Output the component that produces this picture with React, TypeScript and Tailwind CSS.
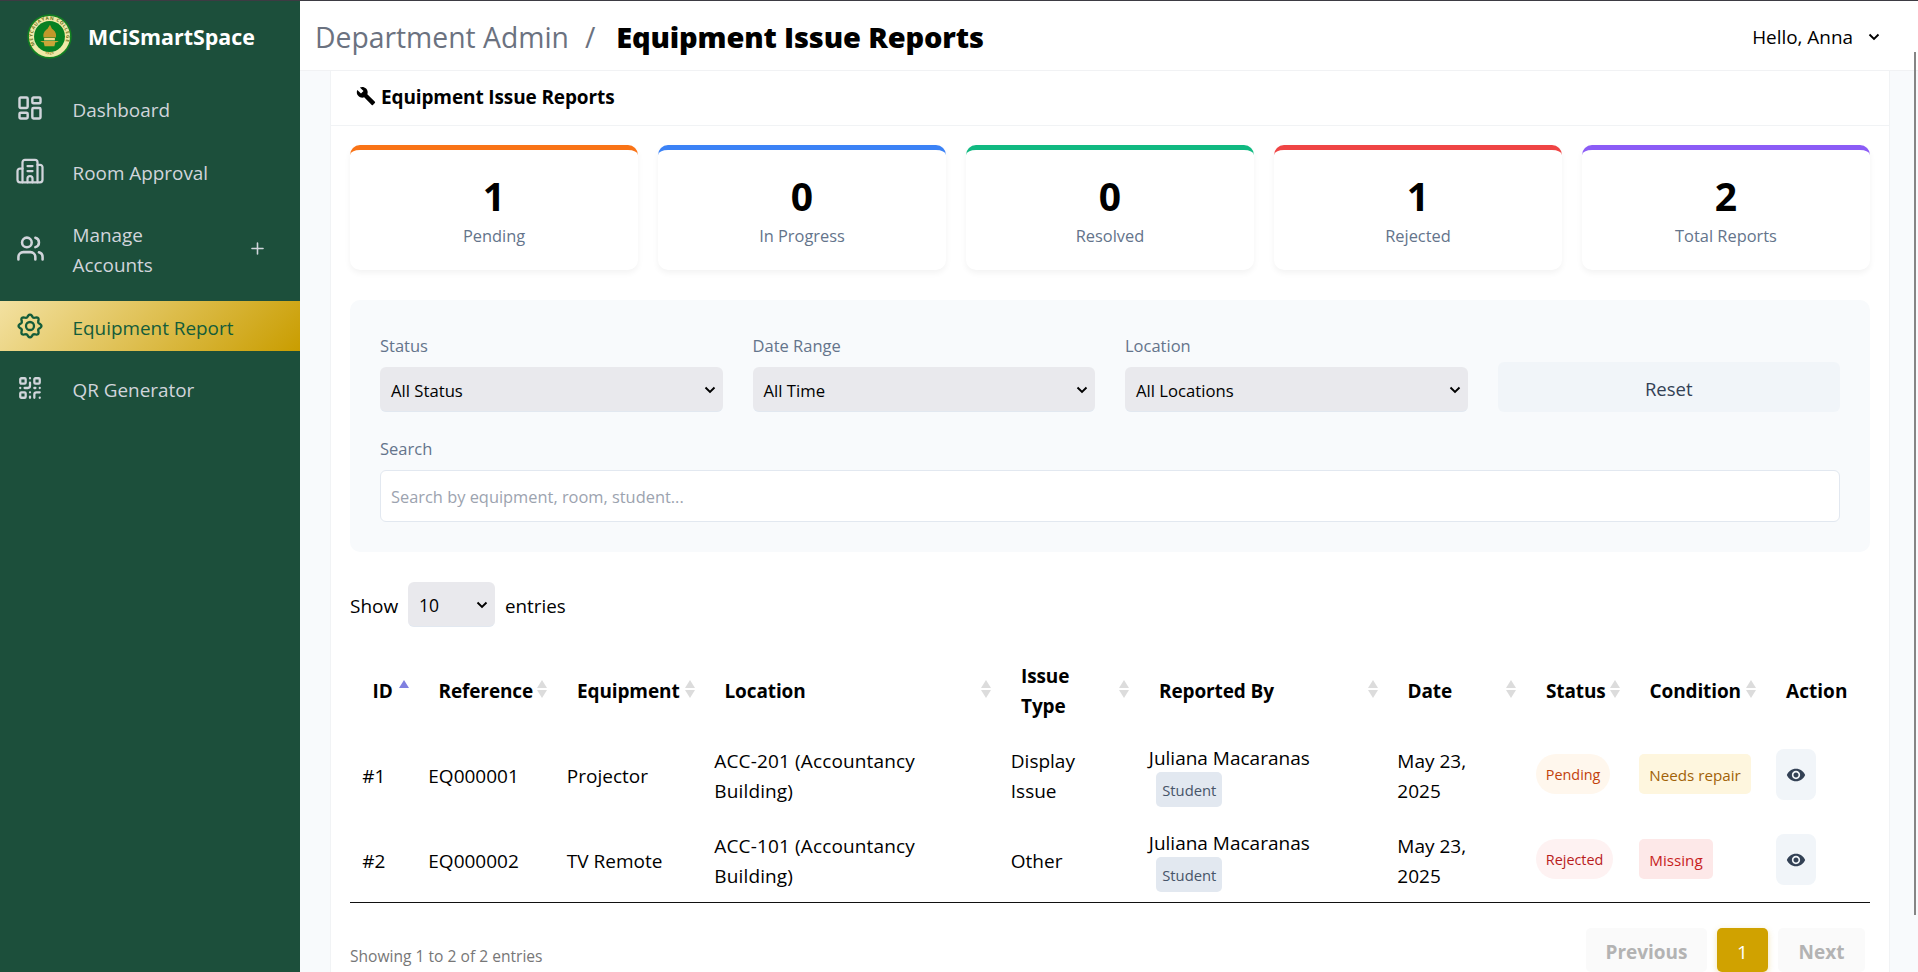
import React from "react";
import { LayoutDashboard, Building2, Users, QrCode, Plus } from "lucide-react";
import { MdBuild, MdVisibility } from "react-icons/md";

const Chevron = ({ className = "" }: { className?: string }) => (
  <svg className={className} width="12" height="8" viewBox="0 0 12 8" fill="none" stroke="#000" strokeWidth="1.900">
    <path d="M1.500 1.500 6 6l4.500-4.500" />
  </svg>
);

const Logo = () => (
  <svg width="45" height="45" viewBox="0 0 46 46">
    <defs>
      <path id="ringTop" d="M9.300 33.500A17.200 17.200 0 1 1 36.700 33.500" />
      <path id="ringBottom" d="M15 39.500A19 19 0 0 0 31 39.500" />
    </defs>
    <circle cx="23" cy="23" r="22.700" fill="#128021" />
    <circle cx="23" cy="23" r="21" fill="#f0e9a8" />
    <text fontSize="4.800" fontWeight="700" fill="#6d7420">
      <textPath href="#ringTop" startOffset="2" textLength="68">MEYCAUAYAN COLLEGE</textPath>
    </text>
    <text fontSize="4" fontWeight="700" fill="#a08c2a">
      <textPath href="#ringBottom" startOffset="3.500">1925</textPath>
    </text>
    <circle cx="23" cy="23" r="15.800" fill="#078023" />
    <path d="M17 24c-1-4 1-7 4-9l2.500-4 2 4c3 2 5 5 4 9z" fill="#c0982a" />
    <path d="M13.500 27.500h19l-2 1.500h-15zM17 29h12l-1 4H18z" fill="#c9a638" />
    <path d="M17.500 24.500h11v2.500h-11z" fill="#f0dc8e" />
  </svg>
);

const COG = Array.from({ length: 97 }, (_, i) => {
  const t = (i / 96) * Math.PI * 2;
  const r = 10.2 + 1.25 * Math.cos(8 * t);
  return `${i ? "L" : "M"}${(14 + r * Math.sin(t)).toFixed(2)} ${(14 - r * Math.cos(t)).toFixed(2)}`;
}).join("") + "Z";

const Cog = () => (
  <svg width="28" height="28" viewBox="0 0 28 28" fill="none" stroke="currentColor" strokeWidth="2.300" strokeLinejoin="round">
    <path d={COG} />
    <circle cx="14" cy="14" r="4" />
  </svg>
);

const NavItem = ({ icon: Icon, label, active = false, tall = false, size = 28, stroke = 2.1 }: any) => (
  <div
    className={
      (active
        ? "bg-[linear-gradient(135deg,#f3e1a1,#c99d00)] text-[#145c3a] "
        : "text-[#d1d5db] ") +
      (tall ? "h-[79px] " : "h-[50px] ") +
      "flex items-center pl-4"
    }
  >
    <span className="flex w-7 shrink-0 items-center justify-center">
      <Icon size={size} strokeWidth={stroke} className="shrink-0" />
    </span>
    <span className={(active ? "pt-[4px] " : "pt-[3px] ") + "ml-[28.500px] w-[170px] shrink-0 text-[18.900px] leading-[30px]"}>
      {tall ? <>Manage<br />Accounts</> : label}
    </span>
    {tall && <Plus size={19} strokeWidth={2} className="ml-[5px] shrink-0" />}
  </div>
);

const stats = [
  ["1", "Pending", "border-[#f97316]"],
  ["0", "In Progress", "border-[#3b82f6]"],
  ["0", "Resolved", "border-[#10b981]"],
  ["1", "Rejected", "border-[#ef4444]"],
  ["2", "Total Reports", "border-[#8b5cf6]"],
];

const SelectField = ({ label, value }: { label: string; value: string }) => (
  <div className="flex flex-col">
    <span className="h-[37px] pt-px text-[16.500px] leading-[30px] text-[#64748b]">{label}</span>
    <div className="flex h-[45px] items-center justify-between rounded-md border-b border-[#e2e8f0] bg-[#e9e9ed] pr-[7px] pl-[11px] text-[16.700px]">
      <span className="pt-[3px]">{value}</span>
      <Chevron className="mt-px" />
    </div>
  </div>
);

const Sort = ({ asc = false }: { asc?: boolean }) => (
  <svg width="10" height="18" viewBox="0 0 10 18" className="absolute top-[30px] right-[7.500px]">
    <path d="M5 0 10 8H0z" fill={asc ? "#8080e0" : "#dcdcdc"} />
    {!asc && <path d="M0 10h10L5 18z" fill="#dcdcdc" />}
  </svg>
);

const headers = ["ID", "Reference", "Equipment", "Location", "Issue Type", "Reported By", "Date", "Status", "Condition", "Action"];
const cols = "grid grid-cols-[66px_138.500px_147.500px_296.500px_138px_248.500px_138.500px_103.500px_136.500px_106.500px]";

const rows = [
  { id: "#1", ref: "EQ000001", eq: "Projector", loc: "ACC-201 (Accountancy", issue: ["Display", "Issue"], status: "Pending", sc: "bg-[#fff7ed] text-[#c2410c]", cond: "Needs repair", cc: "bg-[#fef6de] text-[#a16207]" },
  { id: "#2", ref: "EQ000002", eq: "TV Remote", loc: "ACC-101 (Accountancy", issue: ["Other"], status: "Rejected", sc: "bg-[#fef2f2] text-[#b91c1c]", cond: "Missing", cc: "bg-[#fde8e8] text-[#c81e1e]" },
];

export default function App() {
  return (
    <div className="flex h-[972px] w-[1918px] flex-col overflow-hidden border-t border-[#3d3b43] bg-white font-['Open_Sans','Noto_Sans',sans-serif] text-[19px] text-black">
      <div className="flex min-h-0 flex-1">
        <aside className="flex w-[300px] shrink-0 flex-col bg-[#1c4f3b]">
          <div className="flex h-[70px] items-center pl-[27px]">
            <Logo />
            <span className="ml-4 pt-[2px] text-[21.400px] font-bold text-white">MCiSmartSpace</span>
          </div>
          <nav className="mt-[12px] flex flex-col gap-[13px]">
            <NavItem icon={LayoutDashboard} label="Dashboard" />
            <NavItem icon={Building2} label="Room Approval" size={30} stroke={1.8} />
            <NavItem icon={Users} size={29} tall />
            <NavItem icon={Cog} label="Equipment Report" active />
            <div className="-mt-px">
              <NavItem icon={QrCode} label="QR Generator" size={26} />
            </div>
          </nav>
        </aside>
        <main className="relative flex min-w-0 flex-1 flex-col bg-[#f8fafc]">
          <header className="flex h-[70px] shrink-0 items-center border-b border-[#f1f2f4] bg-white pr-[38px] pl-[15px] pt-1">
            <span className="text-[28.300px] text-[#6b7280]">Department Admin</span>
            <span className="ml-4 text-[28.300px] text-[#6b7280]">/</span>
            <span className="-mt-[2px] ml-[21px] text-[29px] font-extrabold tracking-[-0.150px]">Equipment Issue Reports</span>
            <span className="ml-auto -mt-px text-[18.900px]">Hello, Anna</span>
            <Chevron className="-mt-[2px] ml-[15px]" />
          </header>
          <section className="ml-[30px] flex w-[1560px] flex-1 flex-col border-x border-[#f1f3f5] bg-white">
            <div className="flex h-[55px] shrink-0 items-center border-b border-[#f1f3f5] pb-px pl-[25px]">
              <MdBuild size={20} className="-mt-[4px]" />
              <span className="ml-[5px] text-[19px] font-bold tracking-[-0.120px]">Equipment Issue Reports</span>
            </div>
            <div className="flex flex-col px-[19px] pt-[19px]">
              <div className="grid grid-cols-5 gap-5">
                {stats.map(([n, l, c]) => (
                  <div key={l} className={c + " flex h-[125px] flex-col items-center rounded-[10px] border-t-[5px] bg-white pt-[23px] shadow-[0_3px_6px_rgba(0,0,0,0.05)]"}>
                    <span className="text-[39px] leading-[46px] font-bold">{n}</span>
                    <span className="pt-[2px] text-[16.400px] leading-[30px] text-[#64748b]">{l}</span>
                  </div>
                ))}
              </div>
              <div className="mt-[30px] flex h-[252px] flex-col rounded-[10px] bg-[#f8fafc] p-[30px]">
                <div className="grid grid-cols-4 gap-[30px]">
                  <SelectField label="Status" value="All Status" />
                  <SelectField label="Date Range" value="All Time" />
                  <SelectField label="Location" value="All Locations" />
                  <div className="mt-8 flex h-[50px] items-center justify-center rounded-md bg-[#f1f5f9] pt-[3px] text-[18.500px] text-[#334155]">Reset</div>
                </div>
                <span className="mt-[21px] h-[37px] pt-px text-[16.500px] leading-[30px] text-[#64748b]">Search</span>
                <div className="flex h-[52px] items-center rounded-md border border-[#e2e8f0] bg-white px-[10px] pt-[2px] text-[16.400px] text-[#9ca3af]">Search by equipment, room, student...</div>
              </div>
              <div className="mt-[30px] flex h-[45px] items-center">
                <span className="w-[58px] pt-[3px]">Show</span>
                <div className="flex h-[45px] w-[87px] items-center justify-between rounded-md border-b border-[#e2e8f0] bg-[#e9e9ed] pr-[7px] pl-[11px] text-[17.500px]">
                  <span className="pt-[3px]">10</span>
                  <Chevron className="mt-px" />
                </div>
                <span className="ml-[10px] pt-[3px] text-[18.800px]">entries</span>
              </div>
              <div className="mt-[23px] border-b border-[#111] leading-[30px]">
                <div className={cols + " h-[82px] items-center"}>
                  {headers.map((h, i) => (
                    <div key={h} className="relative flex h-[82px] items-center pb-px pl-[22.500px] text-[19px] font-bold tracking-[-0.120px]">
                      <span className={i === 9 ? "tracking-[0.050px]" : ""}>{h === "Issue Type" ? <>Issue<br />Type</> : h}</span>
                      {i < 9 && <Sort asc={i === 0} />}
                    </div>
                  ))}
                </div>
                {rows.map((r) => (
                  <div key={r.id} className={cols + " h-[85px] items-center *:relative *:top-px *:pl-[12.300px]"}>
                    <span>{r.id}</span>
                    <span>{r.ref}</span>
                    <span>{r.eq}</span>
                    <span className="tracking-[0.140px]">{r.loc}<br />Building)</span>
                    <span>{r.issue[0]}{r.issue[1] && <><br />{r.issue[1]}</>}</span>
                    <div className="flex flex-col items-start">
                      <span className="leading-[29px]">Juliana Macaranas</span>
                      <span className="-mt-px ml-[7.500px] flex h-[35px] w-[66px] items-center justify-center rounded-[5px] bg-[#e2e8f0] text-[14.800px] text-[#475569]">Student</span>
                    </div>
                    <span>May 23,<br />2025</span>
                    <div className="-mt-[4px] flex">
                      <span className={r.sc + " flex h-10 items-center rounded-[20px] px-[10px] pt-[2px] text-[14.400px]"}>{r.status}</span>
                    </div>
                    <div className="-mt-[4px] flex">
                      <span className={r.cc + " flex h-10 items-center rounded-[5px] px-[10px] pt-[3px] text-[15.200px]"}>{r.cond}</span>
                    </div>
                    <div className="-mt-[2px]">
                      <div className="flex h-[51px] w-10 items-center justify-center rounded-lg bg-[#f1f5f9] text-[#334155]"><MdVisibility size={20} /></div>
                    </div>
                  </div>
                ))}
              </div>
              <div className="flex pt-[25px]">
                <span className="mt-[13px] text-[15.600px] leading-[30px] text-[#777]">Showing 1 to 2 of 2 entries</span>
                <div className="mr-[5px] ml-auto flex gap-[10px] text-[19px] font-bold text-[#b3b3b3]">
                  <span className="flex h-11 w-[121px] items-center justify-center rounded-[5px] bg-[#fafafa] pt-1">Previous</span>
                  <span className="flex h-11 w-[51px] items-center justify-center rounded-[5px] bg-[#d0a200] pt-1 font-normal text-white shadow-[0_2px_6px_rgba(208,162,0,0.3)]">1</span>
                  <span className="flex h-11 w-[87px] items-center justify-center rounded-[5px] bg-[#fafafa] pt-1">Next</span>
                </div>
              </div>
            </div>
          </section>
          <div className="absolute top-[51px] right-[2px] h-[863px] w-[2px] bg-[#858585]" />
        </main>
      </div>
    </div>
  );
}
